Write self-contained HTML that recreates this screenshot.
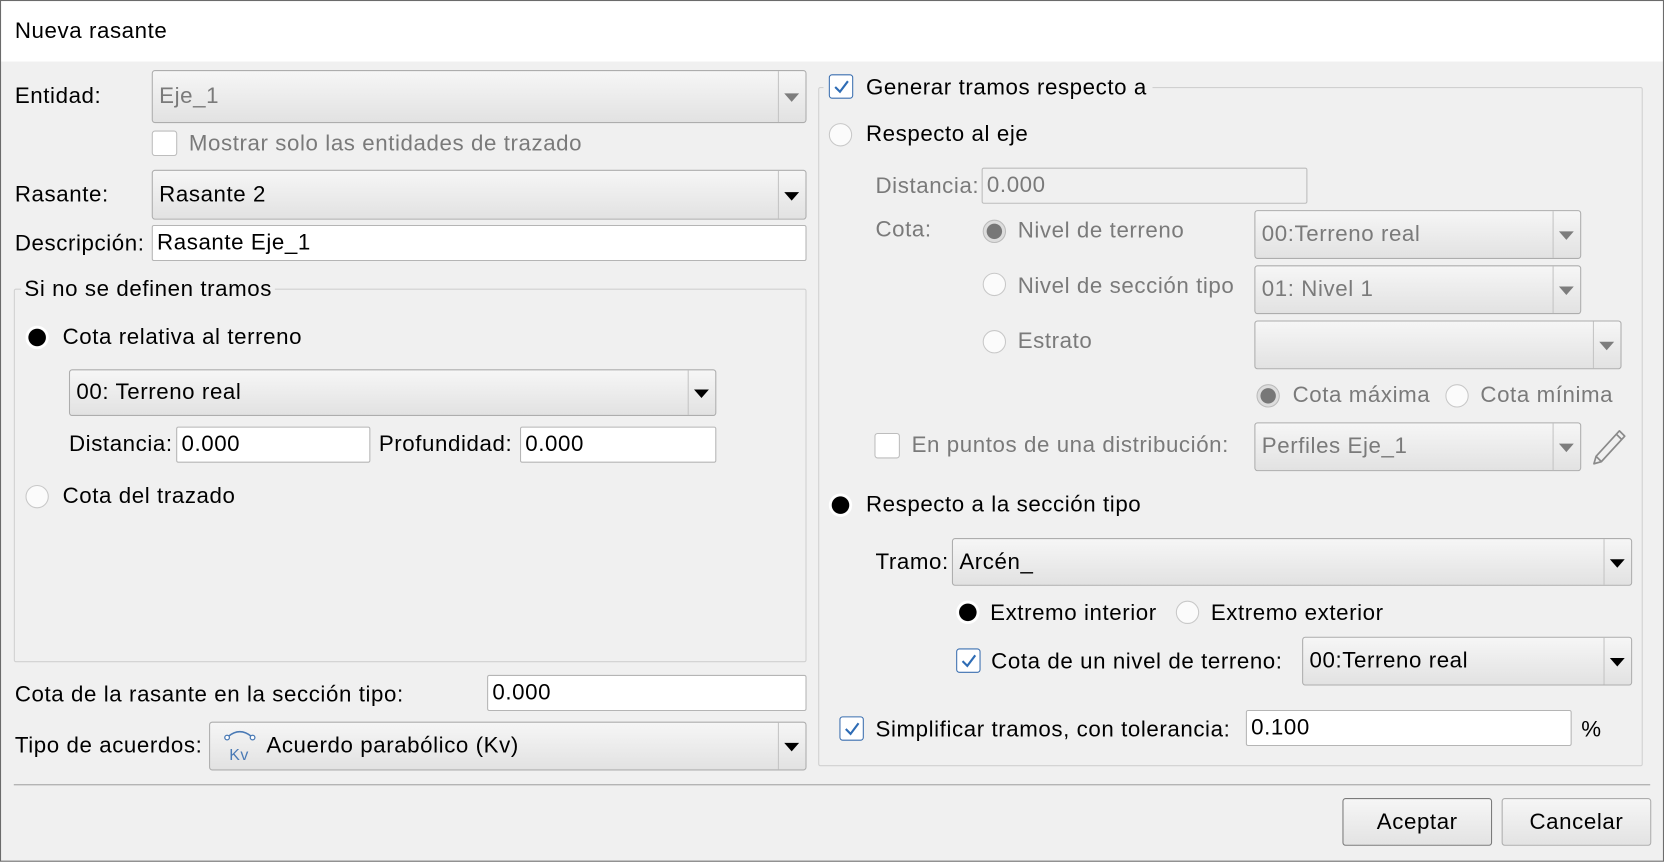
<!DOCTYPE html>
<html><head><meta charset="utf-8"><style>
html,body{margin:0;padding:0;width:1664px;height:862px;overflow:hidden;background:#f0f0f0}
#w{position:absolute;left:0;top:0;width:1568px;height:812px;transform:scale(1.06122);transform-origin:0 0;background:#f0f0f0;font-family:"Liberation Sans",sans-serif;font-size:21px;letter-spacing:0.55px;color:#000}
.a{position:absolute;white-space:nowrap}
.t{position:absolute;white-space:nowrap;line-height:26px;transform:translateY(-13px)}
.g{color:#7a7a7a}
.cb{position:absolute;box-sizing:border-box;border:1px solid #adadad;border-radius:3px;background:linear-gradient(#f6f6f6,#e2e2e2)}
.cb span{position:absolute;left:6px;top:50%;transform:translateY(-50%);line-height:26px}
.cb i{position:absolute;right:25px;top:0;bottom:0;border-left:1px solid #c4c4c4}
.cb b{position:absolute;right:6px;top:50%;margin-top:-3px;width:0;height:0;border-left:7px solid transparent;border-right:7px solid transparent;border-top:8px solid #000}
.cb.d b{border-top-color:#7d7d7d}
.cb.d span{color:#7a7a7a}
.in{position:absolute;box-sizing:border-box;border:1px solid #b5b5b5;border-radius:2px;background:#fff}
.in span{position:absolute;left:4px;top:50%;transform:translateY(-50%);line-height:26px}
.in.d{background:#f0f0f0;border-color:#bcbcbc}.in.d span{color:#7a7a7a}
.r{position:absolute;box-sizing:border-box;width:22px;height:22px;border-radius:50%;border:1px solid #c8c8c8;background:#fbfbfb;transform:translateY(-11px)}
.r.f{border:2px solid #fff;background:radial-gradient(circle,#000 0 8px,#fff 8.5px)}
.r.fg{background:radial-gradient(circle,#777 0 7px,#ddd 7.5px);border:1px solid #bbb}
.c{position:absolute;box-sizing:border-box;width:24px;height:24px;border:1px solid #a8a8a8;border-radius:3px;background:#fff;transform:translateY(-12px)}
.c.k{border-color:#3b6fb0}
.c svg{position:absolute;left:3px;top:3px}
.btn{position:absolute;box-sizing:border-box;border:1px solid #adadad;border-radius:3px;background:linear-gradient(#f6f6f6,#e3e3e3);text-align:center;line-height:43px}
</style></head><body><div id="w">
<div class="a" style="left:0;top:0;width:1568px;height:58px;background:#fff"></div>
<div class="a" style="left:0;top:0;width:1566px;height:810px;border:1px solid #6b6b6b"></div>
<div class="t" style="left:14px;top:30px">Nueva rasante</div>

<div class="t" style="left:14px;top:91px">Entidad:</div>
<div class="cb d" style="left:143px;top:66px;width:617px;height:50px"><span>Eje_1</span><i></i><b></b></div>
<div class="c" style="left:143px;top:135px;border-color:#bdbdbd"></div>
<div class="t g" style="left:178px;top:136px">Mostrar solo las entidades de trazado</div>

<div class="t" style="left:14px;top:184px">Rasante:</div>
<div class="cb" style="left:143px;top:160px;width:617px;height:47px"><span>Rasante 2</span><i></i><b></b></div>
<div class="t" style="left:14px;top:230px">Descripción:</div>
<div class="in" style="left:143px;top:212px;width:617px;height:34px"><span>Rasante Eje_1</span></div>

<div class="a" style="left:13px;top:272px;width:747px;height:352px;box-sizing:border-box;border:1px solid #d0d0d0;border-radius:2px"></div>
<div class="t" style="left:20px;top:273px;background:#f0f0f0;padding:0 3px">Si no se definen tramos</div>
<div class="r f" style="left:24px;top:318px"></div>
<div class="t" style="left:59px;top:318px">Cota relativa al terreno</div>
<div class="cb" style="left:65px;top:348px;width:610px;height:44px"><span>00: Terreno real</span><i></i><b></b></div>
<div class="t" style="left:65px;top:419px">Distancia:</div>
<div class="in" style="left:166px;top:402px;width:183px;height:34px"><span>0.000</span></div>
<div class="t" style="left:357px;top:419px">Profundidad:</div>
<div class="in" style="left:490px;top:402px;width:185px;height:34px"><span>0.000</span></div>
<div class="r" style="left:24px;top:468px"></div>
<div class="t" style="left:59px;top:468px">Cota del trazado</div>

<div class="t" style="left:14px;top:655px">Cota de la rasante en la sección tipo:</div>
<div class="in" style="left:459px;top:636px;width:301px;height:34px"><span>0.000</span></div>
<div class="t" style="left:14px;top:703px">Tipo de acuerdos:</div>
<div class="cb" style="left:197px;top:680px;width:563px;height:46px">
<svg class="a" style="left:12px;top:6px" width="32" height="34" viewBox="0 0 32 34"><path d="M5 7 Q16 -2 27 7" fill="none" stroke="#4a7ab5" stroke-width="1.5"/><circle cx="4" cy="8" r="2.2" fill="#fff" stroke="#4a7ab5" stroke-width="1.2"/><circle cx="28" cy="8" r="2.2" fill="#fff" stroke="#4a7ab5" stroke-width="1.2"/><text x="6" y="29" font-family="Liberation Sans,sans-serif" font-size="15" fill="#4a7ab5">Kv</text></svg>
<span style="left:53px">Acuerdo parabólico (Kv)</span><i></i><b></b></div>

<div class="a" style="left:771px;top:82px;width:777px;height:640px;box-sizing:border-box;border:1px solid #d0d0d0;border-radius:2px"></div>
<div class="a" style="left:776px;top:68px;width:310px;height:30px;background:#f0f0f0"></div>
<div class="c k" style="left:781px;top:82px;width:23px;height:23px"><svg width="16" height="16" viewBox="0 0 16 16"><path d="M2 8 L6.5 12.5 L14 2.5" fill="none" stroke="#2e6cb5" stroke-width="2"/></svg></div>
<div class="t" style="left:816px;top:83px">Generar tramos respecto a</div>
<div class="r" style="left:781px;top:127px"></div>
<div class="t" style="left:816px;top:127px">Respecto al eje</div>
<div class="t g" style="left:825px;top:176px">Distancia:</div>
<div class="in d" style="left:925px;top:158px;width:307px;height:34px"><span>0.000</span></div>
<div class="t g" style="left:825px;top:217px">Cota:</div>
<div class="r fg" style="left:926px;top:218px"></div>
<div class="t g" style="left:959px;top:218px">Nivel de terreno</div>
<div class="cb d" style="left:1182px;top:198px;width:308px;height:46px"><span>00:Terreno real</span><i></i><b></b></div>
<div class="r" style="left:926px;top:268px"></div>
<div class="t g" style="left:959px;top:270px">Nivel de sección tipo</div>
<div class="cb d" style="left:1182px;top:250px;width:308px;height:46px"><span>01: Nivel 1</span><i></i><b></b></div>
<div class="r" style="left:926px;top:322px"></div>
<div class="t g" style="left:959px;top:322px">Estrato</div>
<div class="cb d" style="left:1182px;top:302px;width:346px;height:46px"><span></span><i></i><b></b></div>
<div class="r fg" style="left:1184px;top:373px"></div>
<div class="t g" style="left:1218px;top:373px">Cota máxima</div>
<div class="r" style="left:1362px;top:373px"></div>
<div class="t g" style="left:1395px;top:373px">Cota mínima</div>
<div class="c" style="left:824px;top:420px;border-color:#bdbdbd"></div>
<div class="t g" style="left:859px;top:420px">En puntos de una distribución:</div>
<div class="cb d" style="left:1182px;top:398px;width:308px;height:46px"><span>Perfiles Eje_1</span><i></i><b></b></div>
<svg class="a" style="left:1498px;top:400px" width="38" height="40" viewBox="0 0 38 40"><path d="M6 30 L28 6 L33 11 L11 35 L4 37 Z M25 9 L30 14 M6 30 L11 35" fill="none" stroke="#8a8a8a" stroke-width="1.6" stroke-linejoin="round"/></svg>

<div class="r f" style="left:781px;top:476px"></div>
<div class="t" style="left:816px;top:476px">Respecto a la sección tipo</div>
<div class="t" style="left:825px;top:530px">Tramo:</div>
<div class="cb" style="left:897px;top:507px;width:641px;height:45px"><span>Arcén_</span><i></i><b></b></div>
<div class="r f" style="left:901px;top:577px"></div>
<div class="t" style="left:933px;top:578px">Extremo interior</div>
<div class="r" style="left:1108px;top:577px"></div>
<div class="t" style="left:1141px;top:578px">Extremo exterior</div>
<div class="c k" style="left:901px;top:623px;width:23px;height:23px"><svg width="16" height="16" viewBox="0 0 16 16"><path d="M2 8 L6.5 12.5 L14 2.5" fill="none" stroke="#2e6cb5" stroke-width="2"/></svg></div>
<div class="t" style="left:934px;top:624px">Cota de un nivel de terreno:</div>
<div class="cb" style="left:1227px;top:600px;width:311px;height:46px"><span>00:Terreno real</span><i></i><b></b></div>
<div class="c k" style="left:791px;top:687px;width:23px;height:23px"><svg width="16" height="16" viewBox="0 0 16 16"><path d="M2 8 L6.5 12.5 L14 2.5" fill="none" stroke="#2e6cb5" stroke-width="2"/></svg></div>
<div class="t" style="left:825px;top:688px">Simplificar tramos, con tolerancia:</div>
<div class="in" style="left:1174px;top:669px;width:307px;height:34px"><span>0.100</span></div>
<div class="t" style="left:1490px;top:688px">%</div>

<div class="a" style="left:13px;top:739px;width:1542px;height:1px;background:#a0a0a0"></div>
<div class="btn" style="left:1265px;top:752px;width:141px;height:45px;border-color:#7a7a7a">Aceptar</div>
<div class="btn" style="left:1415px;top:752px;width:141px;height:45px">Cancelar</div>
</div></body></html>
